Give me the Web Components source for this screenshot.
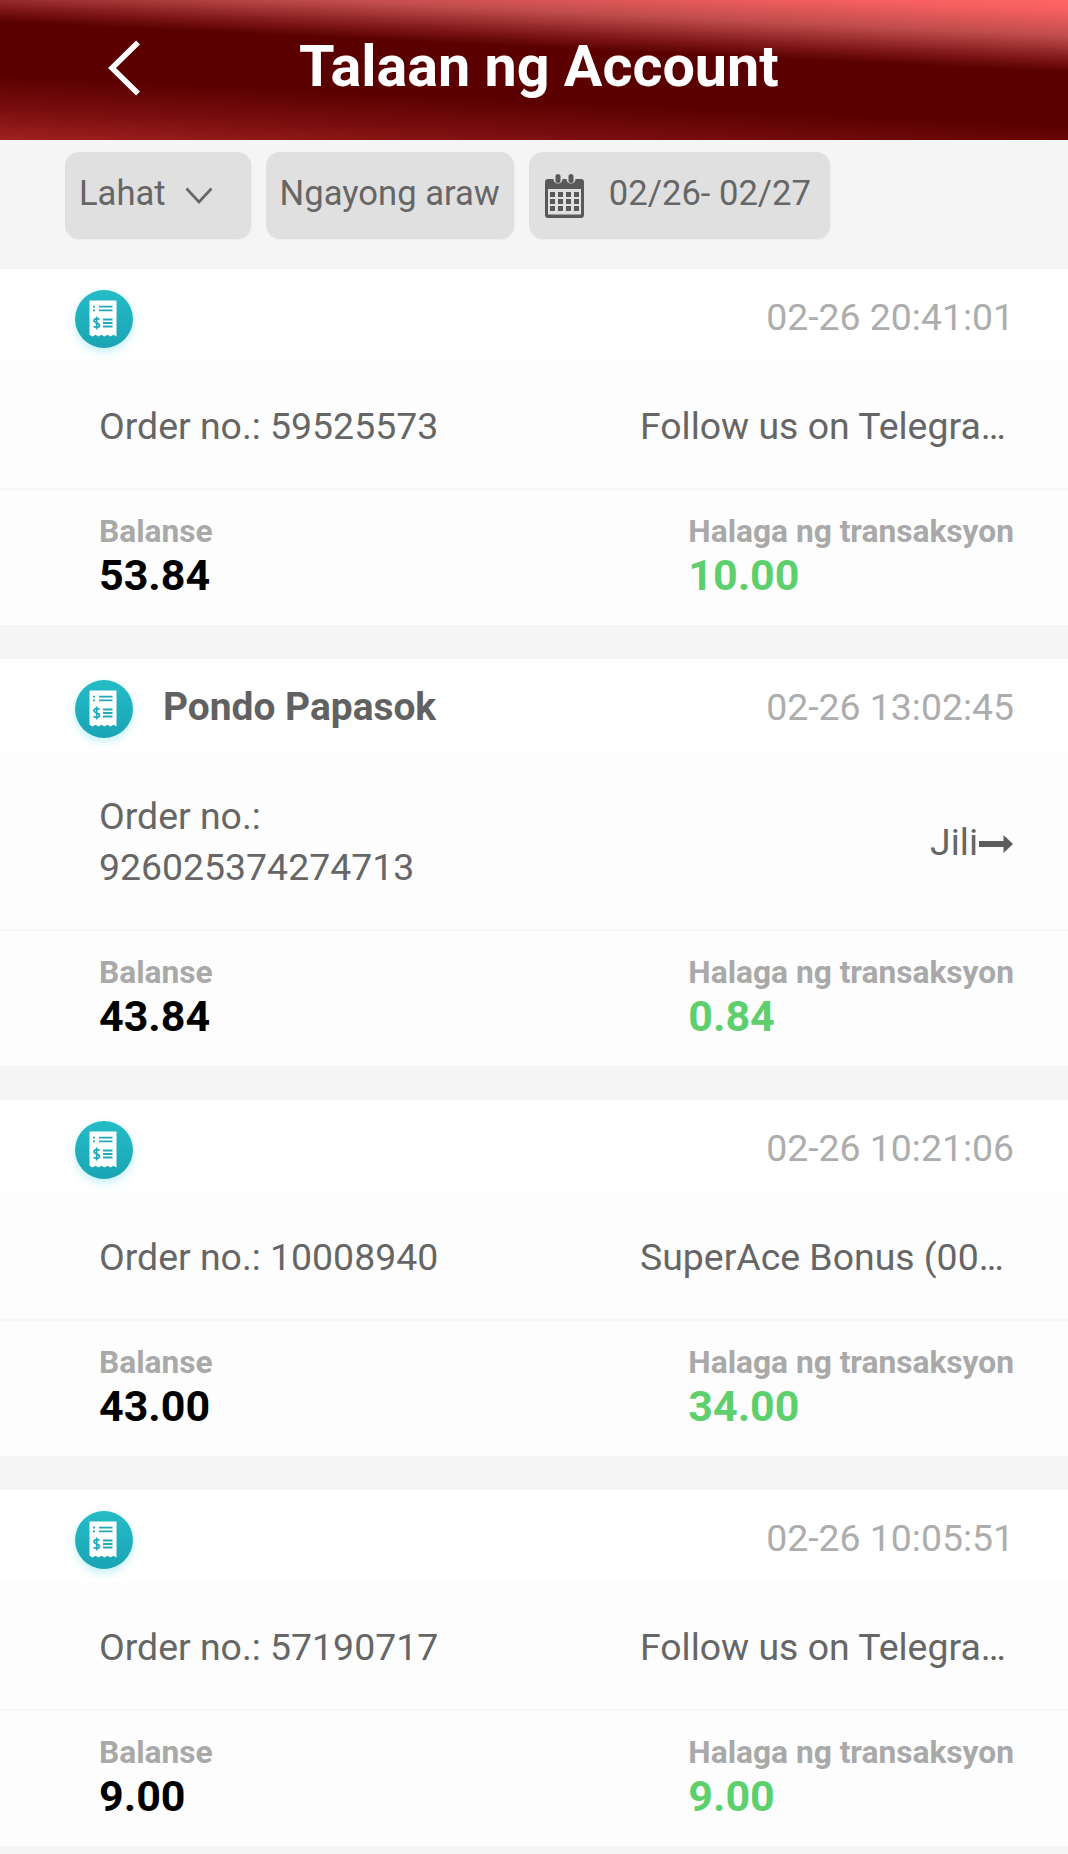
<!DOCTYPE html>
<html lang="tl"><head><meta charset="utf-8"><title>Talaan ng Account</title>
<style>
html,body{margin:0;padding:0;background:#f5f5f5;font-family:Roboto,"Liberation Sans",sans-serif;}
account-page{display:block}
</style></head><body>
<account-page>
  <app-header>Talaan ng Account</app-header>
  <filter-bar>
    <filter-chip kind="select">Lahat</filter-chip>
    <filter-chip>Ngayong araw</filter-chip>
    <filter-chip kind="date">02/26- 02/27</filter-chip>
  </filter-bar>
  <record-card time="02-26 20:41:01" balance="53.84" amount="10.00">
    <span slot="order">Order no.: 59525573</span>
    <span slot="remark">Follow us on Telegra…</span>
  </record-card>
  <record-card title="Pondo Papasok" time="02-26 13:02:45" balance="43.84" amount="0.84" link>
    <span slot="order">Order no.:<br>926025374274713</span>
    <span slot="remark">Jili</span>
  </record-card>
  <record-card time="02-26 10:21:06" balance="43.00" amount="34.00">
    <span slot="order">Order no.: 10008940</span>
    <span slot="remark">SuperAce Bonus (00…</span>
  </record-card>
  <record-card time="02-26 10:05:51" balance="9.00" amount="9.00">
    <span slot="order">Order no.: 57190717</span>
    <span slot="remark">Follow us on Telegra…</span>
  </record-card>
</account-page>
<script>
const def=(name,css,html)=>{
  customElements.define(name,class extends HTMLElement{
    connectedCallback(){
      if(this.shadowRoot)return;
      const r=this.attachShadow({mode:'open'});
      r.innerHTML=`<style>${css}</style>`+(typeof html==='function'?html(this):html);
    }
  });
};
def('app-header',`
:host{display:flex;align-items:center;height:140px;box-sizing:border-box;
 background:linear-gradient(182.700deg,#ff6464 0%,#f55f5f 6%,#c04c4c 19%,#7a1414 32%,#5a0000 38%,#5a0000 66%,#7a0e0e 84%,#a02020 100%);color:#fff}
svg{display:block;margin:-5px 0 0 105px;flex:none}
.t{font-weight:700;font-size:57.500px;line-height:60px;margin-left:156px;white-space:nowrap;margin-top:-6px}
`,`<svg width="38" height="56" viewBox="0 0 38 56" fill="none"><path d="M33 2.500 7 28l26 25.500" stroke="#fff" stroke-width="5.500"/></svg><div class="t"><slot></slot></div>`);
def('filter-bar',`
:host{display:flex;gap:15px;height:129px;box-sizing:border-box;padding:12px 0 0 65px;align-items:flex-start;background:#f5f5f5}
`,`<slot></slot>`);
def('filter-chip',`
:host{display:flex;align-items:center;height:87px;box-sizing:border-box;background:#e0e0e0;border-radius:14px;
 padding:0 14px;color:#666;font-size:34.600px;white-space:nowrap;box-shadow:1px 1px 2px rgba(0,0,0,.04)}
:host([kind=select]){padding-right:38px}
:host([kind=date]){padding:0 19px 0 16px}
.txt{margin-top:-5px}
.c{margin:0 0 0 19px;display:block}
.d{margin:0 25px 0 0;display:block}
`,h=>{
 const k=h.getAttribute('kind');
 const chev=k==='select'?`<svg class="c" width="28" height="18" viewBox="0 0 28 18" fill="none"><path d="M1.500 1.500 14 15 26.500 1.500" stroke="#666" stroke-width="2.600"/></svg>`:'';
 const cal=k==='date'?`<svg class="d" width="39" height="44" viewBox="0 0 39 44" fill="#595959"><path fill-rule="evenodd" d="M3 5h5.500a4.500 4.500 0 0 0 9 0h4a4.500 4.500 0 0 0 9 0H36a3 3 0 0 1 3 3v33a3 3 0 0 1-3 3H3a3 3 0 0 1-3-3V8a3 3 0 0 1 3-3zM3 15v25.500h33V15z"/><rect x="10.500" y="0" width="5" height="9" rx="2.500"/><rect x="23.500" y="0" width="5" height="9" rx="2.500"/>
 ${[6,14,22,30].flatMap(x=>[18,25,32].map(y=>`<rect x="${x-1}" y="${y}" width="5" height="5"/>`)).join('')}</svg>`:'';
 return `${cal}<span class="txt"><slot></slot></span>${chev}`;
});
def('receipt-icon',`
:host{display:block;width:58px;height:58px;border-radius:50%;flex:none;
 background:linear-gradient(180deg,#25bcc6 0%,#1aa4b4 100%);box-shadow:0 4px 8px rgba(60,210,225,.3)}
svg{display:block}
`,`<svg width="58" height="58" viewBox="0 0 58 58" fill="none">
<path d="M14.500 10.500h27v36l-3-1.800-3 1.800-3-1.800-3 1.800-3-1.800-3 1.800-3-1.800-3 1.800-3-1.800z" fill="#fff"/>
<g stroke="#21a9ba" stroke-width="1.800"><path d="M24 16.700h13.500M24 20.300h13.500M18 16.700h2M18 20.300h2M28 29.500h9.500M28 33h9.500M28 36.500h9.500"/></g>
<path d="M24.500 29.500c-1-1.300-5.300-1.500-5.500 1-.2 2.700 5.700 2 5.500 5-.2 2.500-4.800 2.300-5.900.8M21.700 26.500v13" stroke="#21a9ba" stroke-width="1.700"/>
</svg>`);
def('record-card',`
:host{display:block;background:#fdfdfd;margin-bottom:34px;color:#666}
.top{height:92px;background:#fff;display:flex;align-items:flex-start;padding:0 54px 0 75px;box-sizing:border-box}
.top receipt-icon{margin-top:21px}
.ttl{font-weight:700;font-size:38.900px;line-height:44px;margin:26px 0 0 30px;color:#616161;white-space:nowrap}
.time{margin-left:auto;font-size:37.400px;line-height:44px;margin-top:26px;color:#adadad;white-space:nowrap}
.mid{display:flex;justify-content:space-between;align-items:center;padding:40px 54px 36px 99px;font-size:37.400px;line-height:51px;color:#666;border-bottom:2px solid #f7f7f7;white-space:nowrap}
.rm{width:374px;display:flex;align-items:center;justify-content:flex-start}
.rm.link{justify-content:flex-end;width:auto}
.rm svg{margin:3px 1px 0 1px;display:block}
.bot{display:flex;justify-content:space-between;height:135px;box-sizing:border-box;padding:23px 54px 0 99px}
.lb{font-weight:700;font-size:31.700px;line-height:38px;color:#a9a9a9;white-space:nowrap}
.v{font-weight:700;font-size:43px;line-height:48px;color:#000}
.v.g{color:#5dcf6d}
`,h=>{
 const g=a=>h.getAttribute(a)||'';
 const ttl=g('title');
 const link=h.hasAttribute('link');
 return `<div class="top"><receipt-icon></receipt-icon>${ttl?`<div class="ttl">${ttl}</div>`:''}<div class="time">${g('time')}</div></div>
 <div class="mid"><div><slot name="order"></slot></div><div class="rm ${link?'link':''}"><slot name="remark"></slot>${link?`<svg width="34" height="18" viewBox="0 0 34 18" fill="#5c5c5c"><path d="M0 6h24.500V0L34 9 24.500 18v-6H0z"/></svg>`:''}</div></div>
 <div class="bot"><div><div class="lb">Balanse</div><div class="v">${g('balance')}</div></div>
 <div><div class="lb">Halaga ng transaksyon</div><div class="v g">${g('amount')}</div></div></div>`;
});
def('account-page',`:host{display:block}`,`<slot></slot>`);
</script>
</body></html>
